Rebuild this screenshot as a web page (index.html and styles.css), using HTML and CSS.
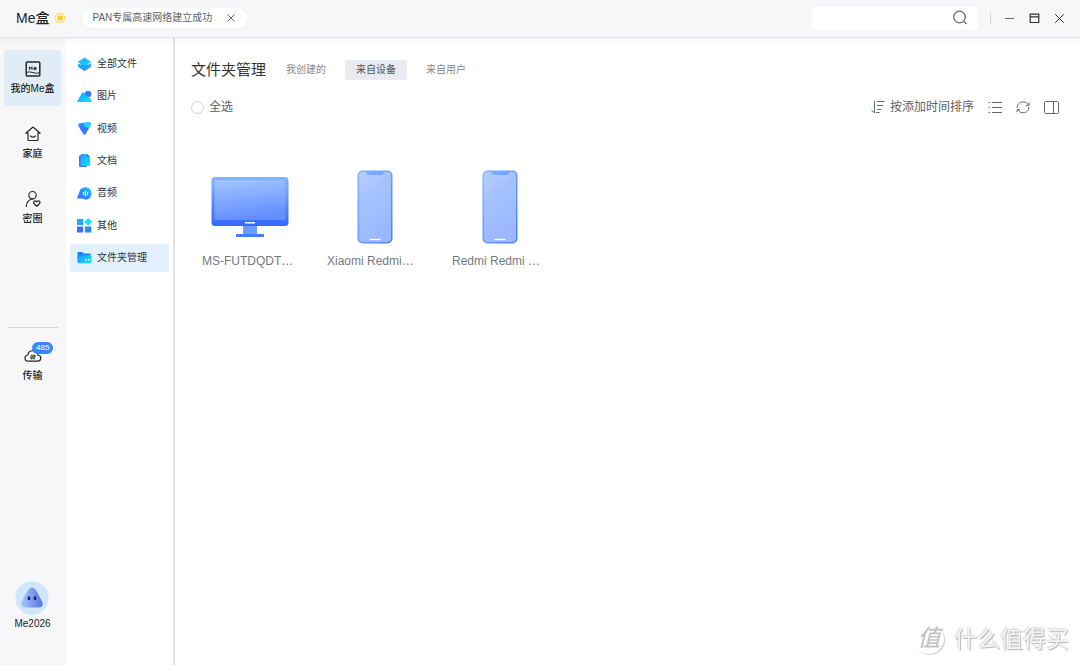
FILE: index.html
```html
<!DOCTYPE html>
<html lang="zh-CN">
<head>
<meta charset="utf-8">
<title>Me盒</title>
<link rel="stylesheet" href="styles.css">
</head>
<body>
<svg class="defs" width="0" height="0" aria-hidden="true">
  <defs>
    <linearGradient id="blue" x1="0" y1="1" x2="1" y2="0"><stop offset="0" stop-color="#3a63ff"/><stop offset="0.5" stop-color="#2492ff"/><stop offset="1" stop-color="#10dcff"/></linearGradient>
    <linearGradient id="folder" x1="0" y1="0" x2="1" y2="0.5"><stop offset="0" stop-color="#218fff"/><stop offset="1" stop-color="#10dcff"/></linearGradient>
    <linearGradient id="cyan" x1="0" y1="0" x2="1" y2="1"><stop offset="0" stop-color="#239eff"/><stop offset="1" stop-color="#10e2ff"/></linearGradient>
    <linearGradient id="deep" x1="0" y1="0" x2="1" y2="1"><stop offset="0" stop-color="#2b8cff"/><stop offset="1" stop-color="#3d6bff"/></linearGradient>
    <linearGradient id="shell" x1="0" y1="0" x2="0" y2="1"><stop offset="0" stop-color="#86b4ff"/><stop offset="1" stop-color="#3568ff"/></linearGradient>
    <linearGradient id="screen" x1="0" y1="0" x2="0.2" y2="1"><stop offset="0" stop-color="#a3c6ff"/><stop offset="1" stop-color="#648fff"/></linearGradient>
    <linearGradient id="case" x1="0" y1="0" x2="1" y2="1"><stop offset="0" stop-color="#8ab5ff"/><stop offset="1" stop-color="#4a80ff"/></linearGradient>
    <linearGradient id="glass" x1="0" y1="0" x2="0.4" y2="1"><stop offset="0" stop-color="#b4d0ff"/><stop offset="0.4" stop-color="#a5c2ff"/><stop offset="1" stop-color="#9bb8ff"/></linearGradient>
    <linearGradient id="face" x1="0" y1="0" x2="1" y2="0"><stop offset="0" stop-color="#a6c9f5"/><stop offset="1" stop-color="#5873e6"/></linearGradient>
  </defs>
  <symbol id="phone" viewBox="0 0 36 74">
    <rect x="0.5" y="0.5" width="35" height="73" rx="5" fill="url(#case)"/>
    <path d="M6 2h3q0 3 3 3h12q3 0 3-3h3q4 0 4 4v62q0 4-4 4H6q-4 0-4-4V6q0-4 4-4z" fill="url(#glass)"/>
    <path d="M12.500 69.500h11" stroke="#fff" stroke-width="1.300"/>
  </symbol>
</svg>
<div class="app">
  <header class="topbar">
    <h1 class="brand">Me盒</h1>
    <svg class="status" width="12" height="12" viewBox="0 0 12 12"><circle cx="6" cy="6" r="4.700" fill="#fff8e5" stroke="#ffd774" stroke-width="1.200"/><circle cx="6" cy="6" r="2.800" fill="#ffc531"/></svg>
    <div class="notice">
      <span>PAN专属高速网络建立成功</span>
      <button aria-label="关闭通知"><svg width="10" height="10" viewBox="0 0 10 10"><path d="M1.500 1.500l7 7M8.500 1.500l-7 7" class="line"/></svg></button>
    </div>
    <div class="search">
      <input type="text" aria-label="搜索">
      <button aria-label="搜索"><svg width="16" height="16" viewBox="0 0 16 16"><circle cx="7.500" cy="7" r="5.800" class="line heavy"/><path d="M11.700 11.200l2.800 2.800" class="line heavy"/></svg></button>
    </div>
    <div class="window-controls">
      <button aria-label="最小化"><svg width="11" height="11" viewBox="0 0 11 11"><path d="M1 5.500h9" class="line"/></svg></button>
      <button aria-label="最大化"><svg width="11" height="11" viewBox="0 0 11 11"><path d="M1.200 1.200h8.600v8.300H1.200zM1.200 3.800h8.600" fill="none" stroke="#333" stroke-width="1.200"/></svg></button>
      <button aria-label="关闭"><svg width="11" height="11" viewBox="0 0 11 11"><path d="M1.200 1.200l8.600 8.600M9.800 1.200L1.200 9.800" fill="none" stroke="#333"/></svg></button>
    </div>
  </header>
  <div class="body">
    <nav class="rail" aria-label="主导航">
      <button class="rail-item rail-active">
        <svg width="18" height="18" viewBox="0 0 18 18"><rect x="2.200" y="2" width="13.600" height="14" rx="1" class="ink bold"/><path d="M2.500 12.300q3-1 6.500.3t6.500.2" class="ink thin"/><path d="M5.400 9.700V6.800l1.300 1.600L8 6.800v2.900M9.900 8.600h2.400c0-1.900-2.400-1.900-2.400 0 0 1.400 1.600 1.500 2.300.8" class="ink thin"/></svg>
        <span>我的Me盒</span>
      </button>
      <button class="rail-item">
        <svg width="18" height="18" viewBox="0 0 18 18"><path d="M4 8.200H1.800L9 2l7.200 6.200H14v6.600q0 .7-.7.700H4.700q-.7 0-.7-.7z" class="ink"/><path d="M6.500 11q2.500 2.400 5 0" class="ink"/></svg>
        <span>家庭</span>
      </button>
      <button class="rail-item">
        <svg width="18" height="18" viewBox="0 0 18 18"><circle cx="8.500" cy="5.200" r="3.700" class="ink"/><path d="M2.300 16.500Q2.600 10 8.500 9" class="ink"/><path d="M12.800 16.300l-2.700-2.600c-1.600-2 .9-3.900 2.700-1.900 1.800-2 4.300-.1 2.700 1.900z" class="ink"/></svg>
        <span>密圈</span>
      </button>
      <hr class="divider">
      <button class="rail-item">
        <span class="badge">485</span>
        <svg width="18" height="18" viewBox="0 0 18 18"><path d="M4.500 14.200C-.2 14.100-.1 8.400 3.900 8c.5-5.400 8.300-6 10 0 4 .4 3.800 6.200-.4 6.200z" class="ink"/><path d="M8 7.700v4.600L6.600 11M10 12.300V7.700L11.400 9M6.700 9.100h4.600M6.400 10.900h4.600" class="ink fine"/></svg>
        <span>传输</span>
      </button>
      <button class="account">
        <svg width="34" height="34" viewBox="0 0 34 34"><circle cx="17" cy="17" r="16.700" fill="#d0e7fb"/><path d="M12.500 10q4.500-6.800 9 0l5.500 10.500q2.500 5.500-3.500 6H11.500q-7-.5-5-6z" fill="url(#face)"/><path d="M14 15.500v3.600M20 15.500v3.600" stroke="#20227c" stroke-width="2.500"/></svg>
        <span>Me2026</span>
      </button>
    </nav>
    <nav class="categories" aria-label="文件分类">
      <div class="category-list">
        <a class="category" href="#"><svg width="15" height="15" viewBox="0 0 15 15"><path d="M1 7.500v2.300L7.500 14 14 9.800V7.500z" fill="url(#deep)"/><path d="M1 6.500l6.500 4.100L14 6.500v2.300L7.500 12.500 1 8.800z" fill="#25b4ff"/><path d="M7.500.5L14.300 5 7.500 9.300.7 5z" fill="url(#cyan)"/></svg>全部文件</a>
        <a class="category" href="#"><svg width="15" height="15" viewBox="0 0 15 15"><circle cx="11" cy="5" r="3.300" fill="url(#deep)"/><path d="M0 13L4.700 4.200q1.200-1.900 2.500-.2l3 4 1.200-1 3.300 4.500q.7 1.500-.8 1.500z" fill="url(#cyan)"/></svg>图片</a>
        <a class="category" href="#"><svg width="15" height="15" viewBox="0 0 15 15"><path d="M1.200 4.300Q.8 2.500 2.700 2.200L12 1.200q2 0 1.700 1.900-.4 1.900-1.700 4.200l-3.500 6q-1 1.300-2 0-4-5.500-5.300-9z" fill="url(#deep)"/><path d="M6.500 1.700l5.500-.5q2 0 1.700 1.900-.5 2.600-1.400 4.100L7 5.200z" fill="#15d8fa"/></svg>视频</a>
        <a class="category" href="#"><svg width="15" height="15" viewBox="0 0 15 15"><rect x="2" y="2" width="8" height="12" rx="1.500" fill="#3e72ff"/><path d="M5 1h5.200L13 4v7.700q0 1.300-1.300 1.300H5q-1.300 0-1.300-1.300V2.300Q3.700 1 5 1z" fill="url(#cyan)"/><path d="M10.200 1v3H13z" fill="#187fff"/></svg>文档</a>
        <a class="category" href="#"><svg width="15" height="15" viewBox="0 0 15 15"><path d="M0 12.500l2.200-6C3.600-1 14.500.1 14.500 7.200c0 6-5.500 7.500-9 5.300z" fill="url(#blue)"/><path d="M6.500 6.300v2.400M8.500 5v5M10.500 6.300v2.400" stroke="#e7faff" stroke-linecap="round" stroke-width="1.200"/></svg>音频</a>
        <a class="category" href="#"><svg width="15" height="15" viewBox="0 0 15 15"><rect x="0" y="1" width="6.200" height="6" fill="#1da7ff"/><rect x="0" y="8.500" width="6.200" height="6" fill="#3f6dff"/><rect x="8" y="8.500" width="6.200" height="6" fill="#248aff"/><path d="M11.200 0L15 3.900l-3.800 3.800-3.900-3.800z" fill="#12e0ff"/></svg>其他</a>
        <a class="category category-active" href="#" aria-current="page"><svg width="15" height="15" viewBox="0 0 15 15"><path d="M0.500 3q0-1 1-1h3.700l1.500 1.500h5.800q1 0 1 1V9h-13z" fill="#1682fc"/><path d="M0.500 5.300H13.500q1 0 1 1v6q0 1-1 1h-12q-1 0-1-1z" fill="url(#folder)"/><path d="M9 9v1.800M11.800 9v1.800" stroke="#eaffff" stroke-width="1.300"/></svg>文件夹管理</a>
      </div>
    </nav>
    <main class="content">
      <div class="heading">
        <h2>文件夹管理</h2>
        <div class="tabs">
          <button class="tab">我创建的</button>
          <button class="tab tab-active">来自设备</button>
          <button class="tab">来自用户</button>
        </div>
      </div>
      <div class="toolbar">
        <label class="select-all"><input type="checkbox">全选</label>
        <div class="tools">
          <button class="sort"><svg width="14" height="14" viewBox="0 0 14 14"><path d="M3.500 1v12L.5 10" fill="none" stroke="#5f6a68"/><path d="M6 1.500h7.500M6 5.500h6M6 9.500h4.500M5 12.500h3.500" class="line"/></svg>按添加时间排序</button>
          <button aria-label="列表视图"><svg width="14" height="14" viewBox="0 0 14 14"><path d="M4 2.500h10M4 7.500h10M4 12.500h10M.5 2.500H2M.5 7.500H2M.5 12.500H2" class="line"/></svg></button>
          <button aria-label="刷新"><svg width="14" height="14" viewBox="0 0 14 14"><path d="M1.200 8C.7 2 9-.8 12.300 5M13 2.500v3.200h-3M12.800 7C13.300 13 5 14.800 1.800 10M1 12.300V9.500h3" class="line"/></svg></button>
          <button aria-label="详情面板"><svg width="15" height="14" viewBox="0 0 15 14"><rect x=".5" y="1.500" width="14" height="12" rx="1" class="line"/><path d="M9.500 1.500v12" class="line"/></svg></button>
        </div>
      </div>
      <div class="devices">
        <a class="device" href="#">
          <svg width="78" height="74" viewBox="0 0 78 74"><path d="M32 55h14v9H32z" fill="#6c9aff"/><path d="M25 64h28v3H25z" fill="#477cff"/><rect x="0.500" y="7" width="77" height="49" rx="3.500" fill="url(#shell)"/><rect x="3.500" y="10" width="71" height="40" rx="1.500" fill="url(#screen)"/><path d="M34 52.800h10" stroke="#fff" stroke-width="1.500"/></svg>
          <span>MS-FUTDQDT…</span>
        </a>
        <a class="device" href="#"><svg width="36" height="74"><use href="#phone"/></svg><span>Xiaomi Redmi…</span></a>
        <a class="device" href="#"><svg width="36" height="74"><use href="#phone"/></svg><span>Redmi Redmi …</span></a>
      </div>
    </main>
  </div>
  <div class="watermark"><span class="seal">值</span><span>什么值得买</span></div>
</div>
</body>
</html>
```
FILE: styles.css
```css
* { box-sizing: border-box; }
body {
  margin: 0;
  background: #fff;
  color: #333;
  font: 10px/16px "Liberation Sans", "Noto Sans CJK SC", sans-serif;
}
button {
  padding: 0;
  border: 0;
  background: none;
  color: inherit;
  font: inherit;
  cursor: pointer;
}
a { color: inherit; text-decoration: none; }
svg { display: block; flex: none; }
.defs { position: absolute; }
.line { fill: none; stroke: #666a70; stroke-width: 1; }
.heavy { stroke-width: 1.3; }
.ink { fill: none; stroke: #24282c; stroke-width: 1.2; stroke-linejoin: round; stroke-linecap: round; }
.bold { stroke-width: 1.5; }
.thin { stroke-width: 1; }
.fine { stroke-width: 0.8; }
.app { display: flex; flex-direction: column; min-height: 100vh; }

.topbar {
  position: relative;
  z-index: 1;
  display: flex;
  align-items: center;
  height: 38px;
  padding: 0 15px 1px 16px;
  background: #f7f7fa;
  border-bottom: 1px solid #e2e2e4;
  box-shadow: 0 2px 5px #0000000d;
}
.brand { margin: 0 5px 0 0; font-size: 14px; line-height: 20px; font-weight: 500; color: #222; }
.notice {
  display: flex;
  align-items: center;
  justify-content: space-between;
  width: 168px;
  height: 22px;
  margin-left: 15px;
  padding: 0 12px 0 10px;
  border: 1px solid #f2f2f4;
  border-radius: 11px;
  background: #fff;
  color: #5c5f66;
}
.search {
  display: flex;
  align-items: center;
  width: 166px;
  height: 23px;
  margin-left: auto;
  padding-right: 10px;
  border-radius: 3px;
  background: #fff;
}
.search input { flex: 1; min-width: 0; height: 100%; padding: 0 8px; border: 0; background: none; font: inherit; outline: 0; }
.window-controls {
  display: flex;
  align-items: center;
  gap: 14px;
  height: 12px;
  margin-left: 12px;
  padding-left: 13px;
  border-left: 1px solid #d2d3d7;
}

.body { display: flex; flex: 1; }
.rail {
  display: flex;
  flex-direction: column;
  align-items: center;
  gap: 9px;
  width: 66px;
  padding: 12px 5px 33px 4px;
  background: #f7f7fa;
  color: #222;
  font-weight: 500;
}
.rail-item {
  position: relative;
  display: flex;
  flex-direction: column;
  align-items: center;
  gap: 3px;
  width: 100%;
  height: 56px;
  padding-top: 10px;
  border-radius: 4px;
}
.rail-active { background: #e1edf6; }
.divider { width: 50px; height: 1px; margin: 82px 0 0; border: 0; background: #d7d8dc; }
.badge {
  position: absolute;
  top: 5px;
  left: 28px;
  padding: 0 4px;
  border-radius: 6px;
  background: #3a86ff;
  color: #fff;
  font-size: 8px;
  line-height: 12px;
}
.account { display: flex; flex-direction: column; align-items: center; gap: 1px; margin-top: auto; font-weight: 400; }

.categories { width: 109px; padding: 12px 4px; border-right: 2px solid #e3e3e5; }
.category-list { display: flex; flex-direction: column; justify-content: space-between; min-height: 222px; }
.category { display: flex; align-items: center; gap: 5px; height: 28px; padding-left: 7px; border-radius: 3px; }
.category-active { background: #e2f0ff; }

.content { flex: 1; min-width: 0; padding: 20px 21px 20px 16px; }
.heading { display: flex; align-items: center; gap: 9px; }
h2 { margin: 0; font-size: 15px; line-height: 24px; font-weight: 400; }
.tabs { display: flex; gap: 8px; }
.tab { height: 20px; padding: 0 11px; border-radius: 3px; color: #85888c; }
.tab-active { background: #eaebf1; color: #4f5357; }
.toolbar {
  display: flex;
  align-items: center;
  justify-content: space-between;
  margin-top: 15px;
  color: #5b5f66;
  font-size: 12px;
  line-height: 20px;
}
.select-all { display: flex; align-items: center; gap: 5px; }
.select-all input { appearance: none; width: 13px; height: 13px; margin: 0; border: 1px solid #d0d1d4; border-radius: 50%; }
.tools { display: flex; align-items: center; gap: 14px; }
.sort { display: flex; align-items: center; gap: 5px; }
.devices { display: flex; flex-wrap: wrap; gap: 30px; padding: 53px 11px 0; }
.device { display: flex; flex-direction: column; align-items: center; gap: 9px; width: 95px; color: #75797e; font-size: 12px; line-height: 16px; }
.device span { width: 100%; white-space: nowrap; }

.watermark {
  position: fixed;
  right: 11px;
  bottom: 10px;
  display: flex;
  align-items: center;
  gap: 10px;
  color: #f4f4f4;
  font-size: 23px;
  line-height: 32px;
  text-shadow: 1px 1px 1px #b4b4b4, -1px -1px 1px #ddd;
  pointer-events: none;
}
.seal { width: 30px; height: 30px; border-radius: 50%; box-shadow: 1px 1px 1px #ccc; color: #c4c4c4; font-style: italic; font-weight: 500; line-height: 28px; text-align: center; text-shadow: none; }
```
